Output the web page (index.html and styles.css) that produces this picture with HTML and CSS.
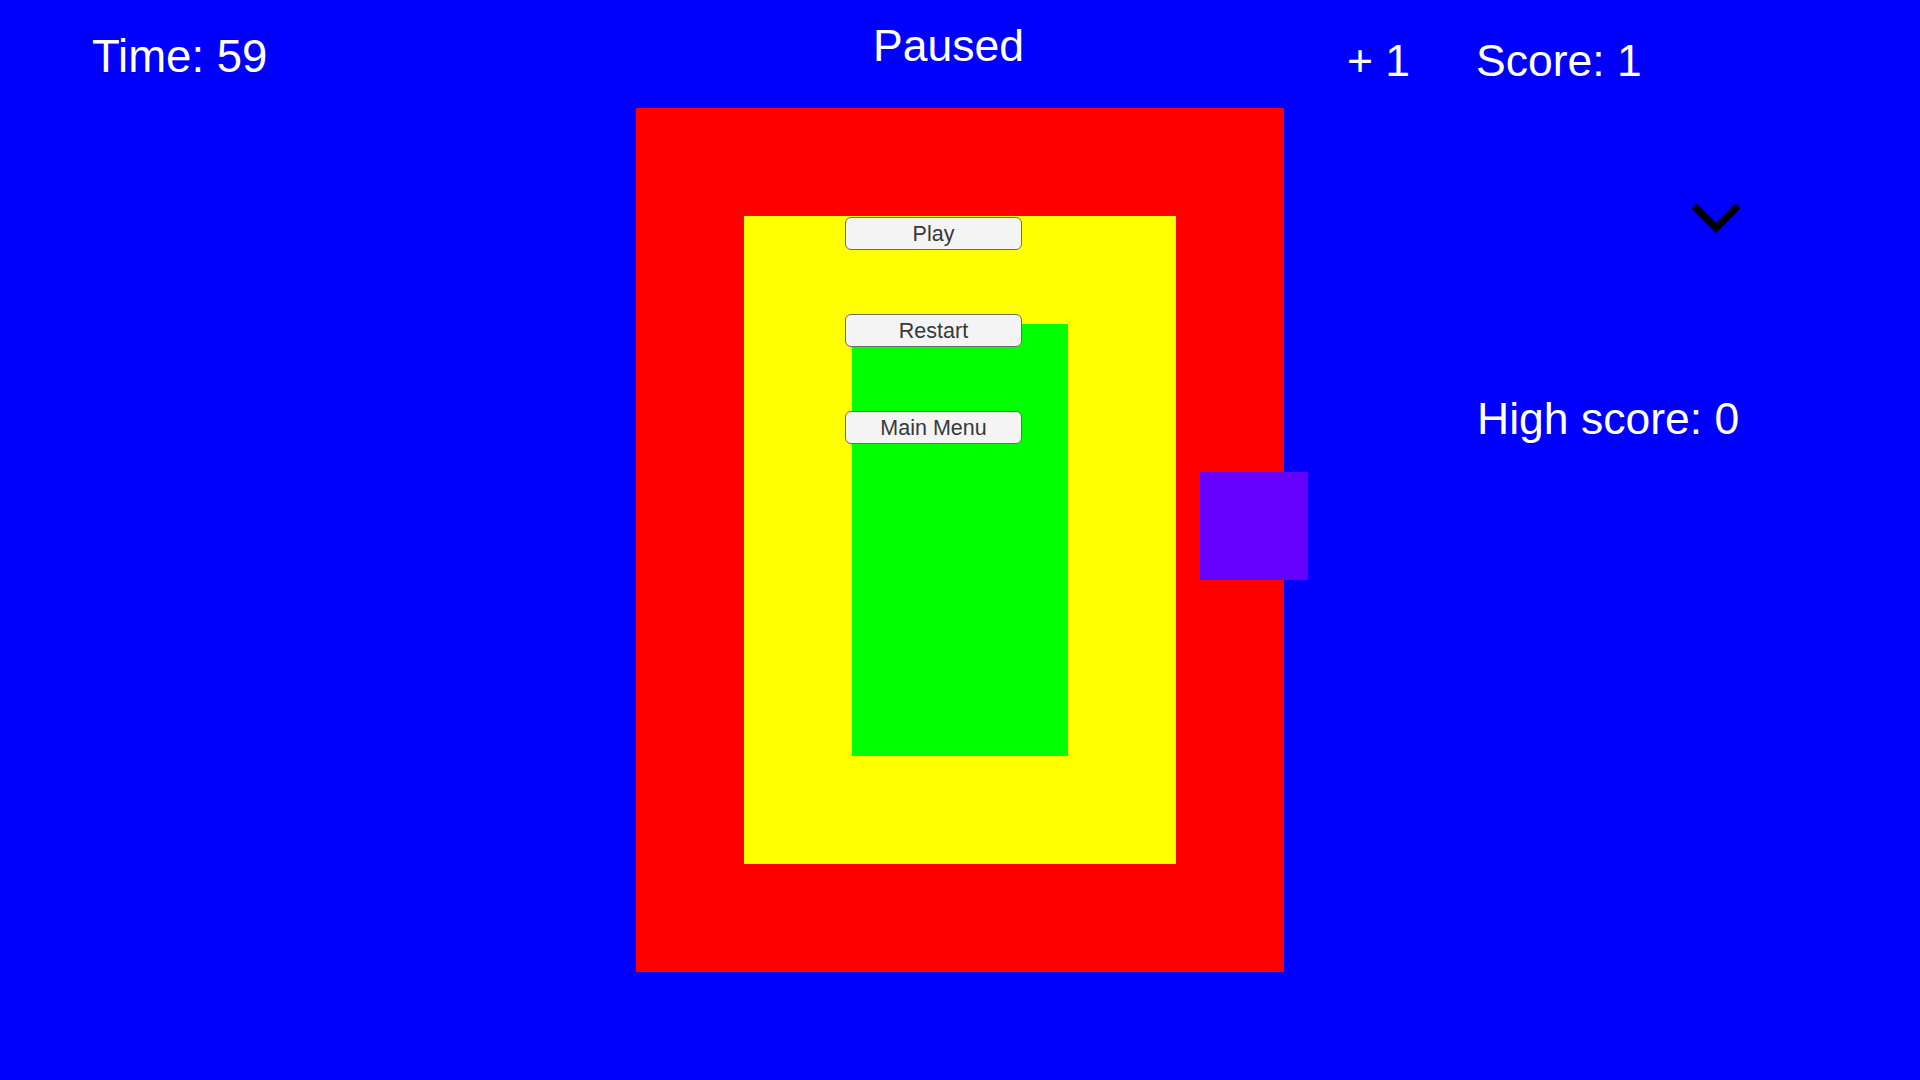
FILE: index.html
```html
<!DOCTYPE html>
<html lang="en">
<head>
<meta charset="utf-8">
<title>Paused</title>
<link rel="stylesheet" href="styles.css">
</head>
<body>
<div class="stage">
  <div class="field">
    <div class="zone-yellow">
      <div class="zone-green"></div>
    </div>
    <div class="pause-menu">
      <button class="menu-btn">Play</button>
      <button class="menu-btn">Restart</button>
      <button class="menu-btn">Main Menu</button>
    </div>
    <div class="player"></div>
  </div>

  <div class="hud-text hud-time">Time: 59</div>
  <div class="hud-text hud-paused">Paused</div>
  <div class="hud-text hud-plus">+ 1</div>
  <div class="hud-text hud-score">Score: 1</div>
  <div class="hud-text hud-high">High score: 0</div>
  <svg class="chevron" width="60" height="40" viewBox="0 0 60 40">
    <polyline points="8,8 30,30 52,8" fill="none" stroke="#000" stroke-width="7" stroke-linejoin="miter"/>
  </svg>
</div>
</body>
</html>
```

FILE: styles.css
```css
html, body {
  margin: 0;
  padding: 0;
}

body {
  background: #0000ff;
  font-family: "Liberation Sans", Arial, sans-serif;
}

.stage {
  position: relative;
  width: 1920px;
  height: 1080px;
  box-sizing: border-box;
  padding-top: 108px;
  display: flex;
  justify-content: center;
  align-items: flex-start;
  background: #0000ff;
  overflow: hidden;
}

.field {
  position: relative;
  background: #ff0000;
  padding: 108px;
}

.zone-yellow {
  background: #ffff00;
  padding: 108px;
}

.zone-green {
  background: #00ff00;
  width: 216px;
  height: 432px;
}

.pause-menu {
  position: absolute;
  left: 209px;
  top: 109px;
  width: 177px;
  display: flex;
  flex-direction: column;
  gap: 64px;
}

.menu-btn {
  height: 33px;
  box-sizing: border-box;
  margin: 0;
  padding: 2px 0 0;
  border: 1px solid #6b6b6b;
  border-radius: 6px;
  background: #f4f4f4;
  color: #383838;
  font-family: "Liberation Sans", Arial, sans-serif;
  font-size: 21.5px;
  line-height: 1;
}

.player {
  position: absolute;
  left: 564px;
  top: 364px;
  width: 108px;
  height: 108px;
  background: #6600ff;
}

.hud-text {
  position: absolute;
  color: #ffffff;
  font-size: 44.5px;
  line-height: 1;
  white-space: nowrap;
}

.hud-time {
  left: 92px;
  top: 34px;
  font-size: 45.5px;
}

.hud-paused {
  left: 873px;
  top: 24px;
}

.hud-plus {
  left: 1347px;
  top: 39px;
}

.hud-score {
  left: 1476px;
  top: 39px;
}

.hud-high {
  left: 1477px;
  top: 397px;
}

.chevron {
  position: absolute;
  left: 1686px;
  top: 198px;
}
```
